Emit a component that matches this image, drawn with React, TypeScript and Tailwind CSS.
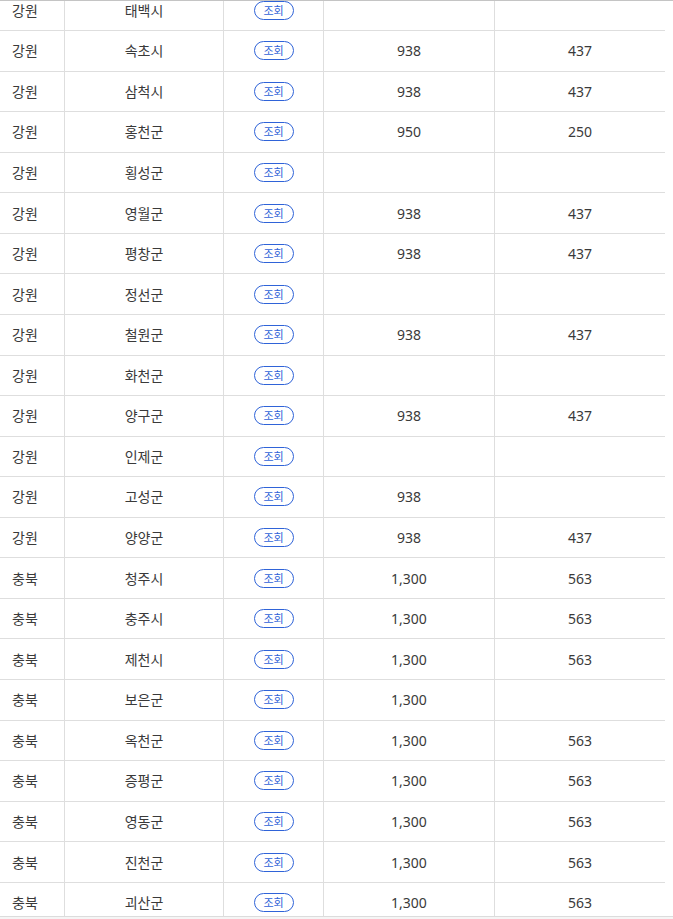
import React from "react";

type Row = { region: string; city: string; a?: string; b?: string };

const rows: Row[] = [
  { region: "강원", city: "태백시" },
  { region: "강원", city: "속초시", a: "938", b: "437" },
  { region: "강원", city: "삼척시", a: "938", b: "437" },
  { region: "강원", city: "홍천군", a: "950", b: "250" },
  { region: "강원", city: "횡성군" },
  { region: "강원", city: "영월군", a: "938", b: "437" },
  { region: "강원", city: "평창군", a: "938", b: "437" },
  { region: "강원", city: "정선군" },
  { region: "강원", city: "철원군", a: "938", b: "437" },
  { region: "강원", city: "화천군" },
  { region: "강원", city: "양구군", a: "938", b: "437" },
  { region: "강원", city: "인제군" },
  { region: "강원", city: "고성군", a: "938" },
  { region: "강원", city: "양양군", a: "938", b: "437" },
  { region: "충북", city: "청주시", a: "1,300", b: "563" },
  { region: "충북", city: "충주시", a: "1,300", b: "563" },
  { region: "충북", city: "제천시", a: "1,300", b: "563" },
  { region: "충북", city: "보은군", a: "1,300" },
  { region: "충북", city: "옥천군", a: "1,300", b: "563" },
  { region: "충북", city: "증평군", a: "1,300", b: "563" },
  { region: "충북", city: "영동군", a: "1,300", b: "563" },
  { region: "충북", city: "진천군", a: "1,300", b: "563" },
  { region: "충북", city: "괴산군", a: "1,300", b: "563" },
];

const App = () => {
  return (
    <div
      className="w-[673px] h-[919px] flex flex-col overflow-hidden bg-white text-[14px] text-[#3a3a3a]"
      style={{ fontFamily: '"Noto Sans", "Noto Sans CJK KR", sans-serif' }}
    >
      <div className="h-[916px] border-t border-[#c4c4c4] overflow-hidden">
        {/* list body, scrolled a little */}
        <div className="w-[665px] -mt-[10.57px]">
          {rows.map((r, i) => (
            <div
              key={i}
              className="grid grid-cols-[65px_159px_100px_171px_170px] h-[40.57px] border-b border-[#dedede]"
            >
              <div className="flex items-center pl-3 border-r border-[#dedede]">{r.region}</div>
              <div className="flex items-center justify-center border-r border-[#dedede]">{r.city}</div>
              <div className="flex items-center justify-center border-r border-[#dedede]">
                <button className="w-10 h-[19px] rounded-full border border-[#2f63d8] text-[11px] leading-none text-[#2f63d8] flex items-center justify-center cursor-pointer">
                  조회
                </button>
              </div>
              <div className="flex items-center justify-center border-r border-[#dedede]">{r.a}</div>
              <div className="flex items-center justify-center">{r.b}</div>
            </div>
          ))}
        </div>
      </div>
      <div className="flex-1 border-t border-[#dcdcdc] bg-[#f5f5f5]" />
    </div>
  );
};

export default App;
